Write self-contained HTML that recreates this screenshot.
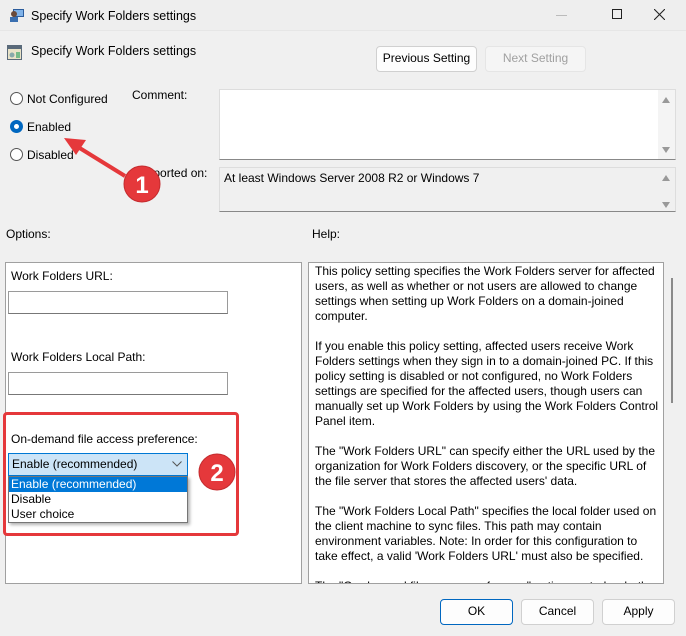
<!DOCTYPE html>
<html><head><style>
*{box-sizing:border-box;margin:0;padding:0}
body{width:686px;height:636px;overflow:hidden;background:#f0f0f0;font-family:"Liberation Sans",sans-serif;font-size:12px;color:#000;position:relative}
.a{position:absolute;white-space:nowrap}
.btn{position:absolute;border:1px solid #d0d0d0;border-radius:4px;background:#fdfdfd;text-align:center;line-height:23px;font-size:12px}
.radio{position:absolute;width:13px;height:13px;border:1px solid #555;border-radius:50%;background:#fff}
.box{position:absolute;background:#fff;border:1px solid #a0a0a0}
.inp{position:absolute;background:#fff;border:1px solid #9a9a9a;border-bottom-color:#777}
</style></head><body>
<div class="a" style="left:0;top:0;width:686px;height:31px;background:#eeeeee;border-bottom:1px solid #e6e6e6"></div>
<svg class="a" style="left:9px;top:8px" width="16" height="14"><rect x="4" y="1" width="11" height="8" fill="#2b5c9c"/><rect x="5" y="2" width="9" height="6" fill="#7fb2e8"/><circle cx="5" cy="6" r="3" fill="#6a4a3a"/><rect x="1" y="9" width="8" height="5" fill="#3a6fb0"/></svg>
<div class="a" style="left:31px;top:9px;font-size:12.5px">Specify Work Folders settings</div>
<div class="a" style="left:556px;top:15px;width:11px;height:1px;background:#bbb"></div>
<div class="a" style="left:612px;top:9px;width:10px;height:10px;border:1px solid #222"></div>
<svg class="a" style="left:654px;top:9px" width="11" height="11"><path d="M0 0L11 11M11 0L0 11" stroke="#222" stroke-width="1.1"/></svg>

<svg class="a" style="left:7px;top:45px" width="15" height="15"><rect x="0" y="0" width="15" height="15" fill="#5a6a7a"/><rect x="1" y="4" width="13" height="10" fill="#e9e3c8"/><circle cx="5" cy="10" r="2.5" fill="#8aa"/><rect x="9" y="7" width="4" height="6" fill="#7b8"/></svg>
<div class="a" style="left:31px;top:44px;font-size:12.5px">Specify Work Folders settings</div>
<div class="btn" style="left:376px;top:46px;width:101px;height:26px">Previous Setting</div>
<div class="btn" style="left:485px;top:46px;width:101px;height:26px;color:#a0a0a0;background:#f5f5f5;border-color:#e5e5e5">Next Setting</div>

<div class="radio" style="left:10px;top:92px"></div><div class="a" style="left:27px;top:92px">Not Configured</div>
<div class="radio" style="left:10px;top:120px;border:4px solid #0067c0"></div><div class="a" style="left:27px;top:120px">Enabled</div>
<div class="radio" style="left:10px;top:148px"></div><div class="a" style="left:27px;top:148px">Disabled</div>
<div class="a" style="left:132px;top:88px">Comment:</div>
<div class="a" style="left:132px;top:166px">Supported on:</div>

<div class="a" style="left:219px;top:89px;width:457px;height:71px;background:#fff;border:1px solid #ddd;border-bottom:1px solid #888"></div>
<div class="a" style="left:658px;top:90px;width:17px;height:69px;background:#f4f4f4"></div>
<svg class="a" style="left:660px;top:94px" width="12" height="62"><path d="M2 9L6 3L10 9Z M2 53L6 59L10 53Z" fill="#999"/></svg>
<div class="a" style="left:219px;top:167px;width:457px;height:45px;background:#f0f0f0;border:1px solid #ddd;border-bottom:1px solid #888"></div>
<div class="a" style="left:224px;top:171px">At least Windows Server 2008 R2 or Windows 7</div>
<svg class="a" style="left:660px;top:172px" width="12" height="38"><path d="M2 9L6 3L10 9Z M2 30L6 36L10 30Z" fill="#999"/></svg>

<div class="a" style="left:6px;top:227px">Options:</div>
<div class="a" style="left:312px;top:227px">Help:</div>

<div class="box" style="left:5px;top:262px;width:297px;height:322px"></div>
<div class="a" style="left:11px;top:269px">Work Folders URL:</div>
<div class="inp" style="left:8px;top:291px;width:220px;height:23px"></div>
<div class="a" style="left:11px;top:350px">Work Folders Local Path:</div>
<div class="inp" style="left:8px;top:372px;width:220px;height:23px"></div>
<div class="a" style="left:11px;top:432px">On-demand file access preference:</div>
<div class="a" style="left:8px;top:453px;width:180px;height:23px;background:#cce4f7;border:1px solid #0078d4"></div>
<div class="a" style="left:12px;top:457px">Enable (recommended)</div>
<svg class="a" style="left:172px;top:461px" width="10" height="6"><path d="M0.5 0.5L5 5L9.5 0.5" stroke="#555" fill="none"/></svg>
<div class="a" style="left:8px;top:476px;width:180px;height:47px;background:#fff;border:1px solid #767676;box-shadow:2px 2px 3px rgba(0,0,0,.3)"></div>
<div class="a" style="left:9px;top:477px;width:178px;height:15px;background:#0078d7"></div>
<div class="a" style="left:11px;top:477px;color:#fff">Enable (recommended)</div>
<div class="a" style="left:11px;top:492px">Disable</div>
<div class="a" style="left:11px;top:507px">User choice</div>
<div class="a" style="left:3px;top:412px;width:236px;height:124px;border:3px solid #e5383b;border-radius:4px"></div>

<div class="box" style="left:308px;top:262px;width:356px;height:322px;overflow:hidden">
<div style="position:absolute;left:6px;top:1px;line-height:15px;white-space:pre;color:#000">This policy setting specifies the Work Folders server for affected
users, as well as whether or not users are allowed to change
settings when setting up Work Folders on a domain-joined
computer.

If you enable this policy setting, affected users receive Work
Folders settings when they sign in to a domain-joined PC. If this
policy setting is disabled or not configured, no Work Folders
settings are specified for the affected users, though users can
manually set up Work Folders by using the Work Folders Control
Panel item.

The "Work Folders URL" can specify either the URL used by the
organization for Work Folders discovery, or the specific URL of
the file server that stores the affected users' data.

The "Work Folders Local Path" specifies the local folder used on
the client machine to sync files. This path may contain
environment variables. Note: In order for this configuration to
take effect, a valid 'Work Folders URL' must also be specified.

The "On-demand file access preference" option controls whether</div></div>
<div class="a" style="left:671px;top:278px;width:2px;height:125px;background:#8a8a8a"></div>

<div class="btn" style="left:440px;top:599px;width:73px;height:26px;border:1px solid #0067c0">OK</div>
<div class="btn" style="left:521px;top:599px;width:73px;height:26px">Cancel</div>
<div class="btn" style="left:602px;top:599px;width:73px;height:26px">Apply</div>

<svg class="a" style="left:0;top:0" width="686" height="636">
<path d="M125 176L78 147" stroke="#e5383b" stroke-width="4"/>
<path d="M64 138L86 140L76 155Z" fill="#e5383b"/>
<circle cx="142" cy="184" r="18" fill="#e5383b" stroke="#c42b2e" stroke-width="1"/>
<text x="142" y="193" text-anchor="middle" fill="#fff" font-family="Liberation Sans" font-weight="bold" font-size="24">1</text>
<circle cx="217" cy="472" r="18" fill="#e5383b" stroke="#c42b2e" stroke-width="1"/>
<text x="217" y="481" text-anchor="middle" fill="#fff" font-family="Liberation Sans" font-weight="bold" font-size="24">2</text>
</svg>
</body></html>
